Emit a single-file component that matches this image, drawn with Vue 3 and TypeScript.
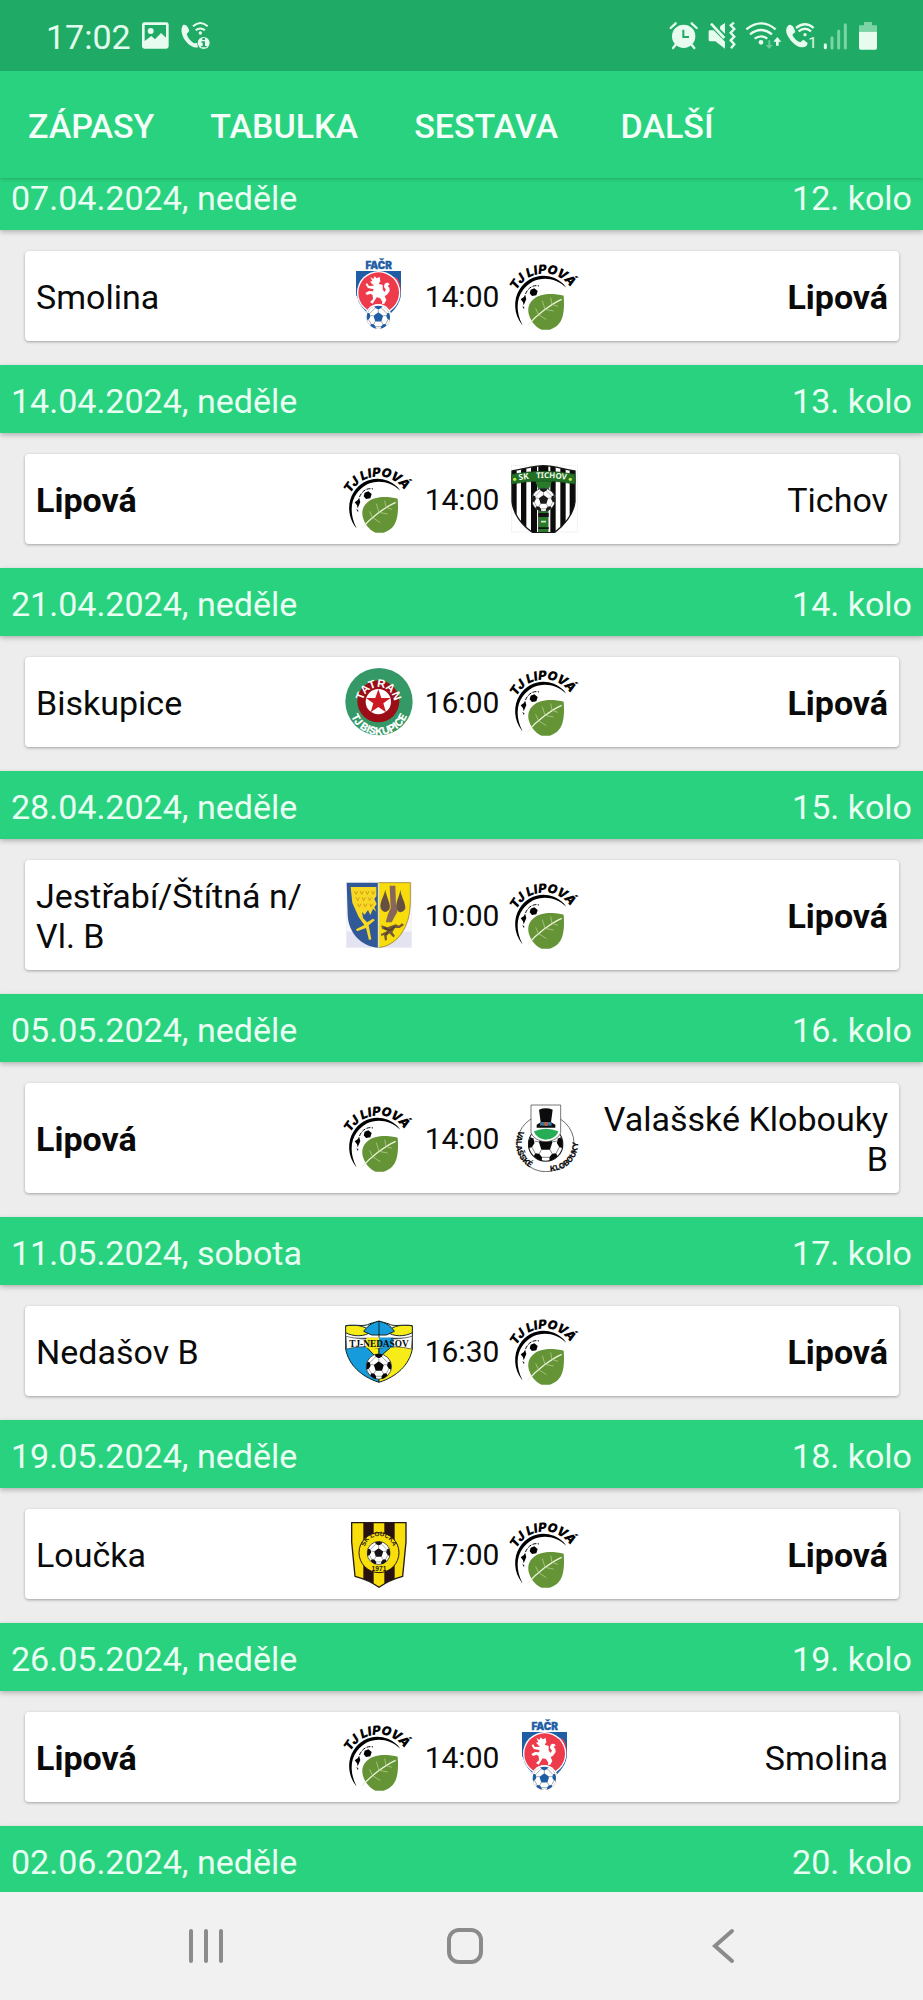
<script setup lang="ts">
interface Match {
  date: string
  round: string
  home: string
  away: string
  homeLogo: string
  awayLogo: string
  time: string
}

const ownTeam = 'Lipová'
const tabs: string[] = ['ZÁPASY', 'TABULKA', 'SESTAVA', 'DALŠÍ']

const matches: Match[] = [
  { date: '07.04.2024, neděle', round: '12. kolo', home: 'Smolina', away: 'Lipová', homeLogo: 'facr', awayLogo: 'lipova', time: '14:00' },
  { date: '14.04.2024, neděle', round: '13. kolo', home: 'Lipová', away: 'Tichov', homeLogo: 'lipova', awayLogo: 'tichov', time: '14:00' },
  { date: '21.04.2024, neděle', round: '14. kolo', home: 'Biskupice', away: 'Lipová', homeLogo: 'biskupice', awayLogo: 'lipova', time: '16:00' },
  { date: '28.04.2024, neděle', round: '15. kolo', home: 'Jestřabí/Štítná n/Vl. B', away: 'Lipová', homeLogo: 'jestrabi', awayLogo: 'lipova', time: '10:00' },
  { date: '05.05.2024, neděle', round: '16. kolo', home: 'Lipová', away: 'Valašské Klobouky B', homeLogo: 'lipova', awayLogo: 'klobouky', time: '14:00' },
  { date: '11.05.2024, sobota', round: '17. kolo', home: 'Nedašov B', away: 'Lipová', homeLogo: 'nedasov', awayLogo: 'lipova', time: '16:30' },
  { date: '19.05.2024, neděle', round: '18. kolo', home: 'Loučka', away: 'Lipová', homeLogo: 'loucka', awayLogo: 'lipova', time: '17:00' },
  { date: '26.05.2024, neděle', round: '19. kolo', home: 'Lipová', away: 'Smolina', homeLogo: 'lipova', awayLogo: 'facr', time: '14:00' },
]

const nextDate = '02.06.2024, neděle'
const nextRound = '20. kolo'

// Allow a line break after each slash of a joint-team name.
const breakable = (name: string): string => name.replace(/\//g, '/\u200b')
</script>

<template>
  <div class="phone">
    <svg class="defs" aria-hidden="true">
      <defs>
        <symbol id="ball" viewBox="0 0 100 100">
          <circle cx="50" cy="50" r="48" fill="#fff" stroke="#222" stroke-width="3" />
          <path d="M50 30 L69 44 L62 66 H38 L31 44 Z" fill="currentColor" />
          <path d="M35 5 Q50 -1 65 5 L62 13 L50 19 L38 13 Z M93 31 Q100 45 97 61 L88 59 L81 47 L84 35 Z M7 31 Q0 45 3 61 L12 59 L19 47 L16 35 Z M83 84 Q74 94 61 97 L60 87 L68 77 L79 76 Z M17 84 Q26 94 39 97 L40 87 L32 77 L21 76 Z" fill="currentColor" />
          <path d="M50 30V19M69 44L81 42M62 66L68 77M38 66L32 77M31 44L19 42M38 13L16 35M62 13L84 35M88 59L79 76M12 59L21 76M40 87H60" fill="none" stroke="#555" stroke-width="2" />
        </symbol>

        <symbol id="lipova" viewBox="0 0 204 204" overflow="visible">
          <path id="lipova-arc" d="M16 86 A95 95 0 0 1 193 109" fill="none" />
          <text font-family="Inter, sans-serif" font-weight="900" font-style="italic" font-size="38" fill="#000">
            <textPath href="#lipova-arc">TJ LIPOVÁ</textPath>
          </text>
          <path d="M33 188 C8 158 6 112 26 82 C54 36 116 26 158 67 L166 77 C126 38 66 42 36 84 C14 112 16 154 34 188 Z" fill="#000" />
          <path d="M40 112 C42 85 62 66 84 72" fill="none" stroke="#000" stroke-width="3" stroke-dasharray="12 4" />
          <path d="M59 83 L70 79 L80 87 L76 100 L63 102 L56 94 Z M29 112 L43 102 L46 111 L38 130 L36 121 Z" fill="#000" />
          <path d="M34 132 L40 136 L39 142 Z" fill="#000" />
          <path d="M158 101 C150 98 92 86 65 114 C46 132 52 155 56 164 C62 182 80 199 92 203 L116 203 C150 192 163 166 158 101 Z" fill="#649435" />
          <path d="M50 190 C76 160 120 126 152 112" fill="none" stroke="#eef4dd" stroke-width="4" />
          <path d="M102 142 L94 116M123 127L119 107M82 157L74 139M101 142L128 147M83 158L106 173M123 127L141 133" fill="none" stroke="#c3d6a0" stroke-width="2" />
        </symbol>

        <symbol id="facr" viewBox="0 0 204 204" overflow="visible">
          <text x="101" y="22" text-anchor="middle" font-family="Inter, sans-serif" font-weight="900" font-size="30" fill="#1f5da5" stroke="#1f5da5">FAČR</text>
          <path d="M33 27 H168 V92 C168 126 142 156 101 181 C60 156 33 126 33 92 Z" fill="#1f5da5" />
          <path d="M156 48 C174 72 170 112 136 148 L108 171 C146 136 159 86 148 45 Z" fill="#e63a4b" />
          <path d="M34 102 C38 126 58 150 82 166" fill="none" stroke="#fff" stroke-width="4" />
          <circle cx="101" cy="92" r="65" fill="#fff" />
          <circle cx="101" cy="92" r="61" fill="#ee3b4b" />
          <path d="M76 45 L85 51 L89 43 L95 49 L104 45 L106 58 L101 65 L113 69 L113 82 L118 90 L123 83 L117 75 C116 61 130 58 134 67 L128 72 L133 77 L134 87 L126 98 L119 102 L124 114 L118 125 L111 126 L112 119 L105 108 L95 106 L88 117 L83 125 L75 120 L84 112 L83 100 L77 95 L66 99 L61 93 L72 87 L84 88 L86 82 L69 78 L62 68 L66 63 L72 72 L87 71 L81 65 L75 59 L82 57 Z" fill="#fff" />
          <circle cx="100" cy="166" r="40" fill="#fff" />
          <use href="#ball" x="62" y="128" width="76" height="76" color="#1f5da5" />
          <circle cx="100" cy="166" r="37" fill="none" stroke="#fff" stroke-width="4" />
        </symbol>

        <clipPath id="tichov-shape">
          <path d="M3 18 C40 12 70 2 97 2 C125 2 158 12 192 18 V110 C188 148 158 183 130 203 H66 C34 183 7 148 3 110 Z" />
        </clipPath>
        <symbol id="tichov" viewBox="0 0 204 204">
          <rect x="1" y="1" width="199" height="200" fill="#fff" stroke="#eee" stroke-width="2" />
          <g clip-path="url(#tichov-shape)">
            <rect width="204" height="204" fill="#fff" />
            <path d="M0 0H17V204H0ZM30 0H46V204H30ZM60 0H78V204H60ZM118 0H134V204H118ZM148 0H164V204H148ZM176 0H204V204H176ZM82 0H112V204H82Z" fill="#0b0b0b" />
            <path d="M73 48H123L113 74H82Z" fill="#287b2a" />
            <rect x="84" y="136" width="27" height="68" fill="#287b2a" />
            <path d="M82 144H113V156H82ZM82 187H113V192H82Z" fill="#111" />
            <path d="M90 170H105" stroke="#cde8c8" stroke-width="5" />
          </g>
          <path d="M3 18 C40 12 70 2 97 2 C125 2 158 12 192 18 V110 C188 148 158 183 130 203 H66 C34 183 7 148 3 110 Z" fill="none" stroke="#171717" stroke-width="4" />
          <path id="tichov-arc" d="M12 48 Q97 31 184 47" fill="none" />
          <path d="M2 28 Q97 10 192 28 V57 Q97 39 2 57 Z" fill="#236f25" stroke="#174f19" stroke-width="2" />
          <text font-family="Noto Sans, sans-serif" font-weight="700" font-size="25" fill="#eef8e8">
            <textPath href="#tichov-arc" startOffset="12">SK</textPath>
          </text>
          <text font-family="Noto Sans, sans-serif" font-weight="700" font-size="24" fill="#eef8e8">
            <textPath href="#tichov-arc" startOffset="64">TICHOV</textPath>
          </text>
          <circle cx="11" cy="43" r="5" fill="#c4e84a" />
          <circle cx="178" cy="43" r="5" fill="#c4e84a" />
          <use href="#ball" x="61" y="68" width="73" height="73" color="#1b1b1b" />
        </symbol>

        <symbol id="biskupice" viewBox="0 0 204 204">
          <circle cx="102" cy="101" r="101" fill="#359967" />
          <circle cx="100" cy="100" r="63" fill="#9c0e17" />
          <circle cx="100" cy="101" r="38" fill="#fff" />
          <path d="M100 64 L109 90 H137 L115 106 L123 133 L100 117 L77 133 L85 106 L63 90 H91 Z" fill="#cc1822" />
          <path id="tatran-arc" d="M54 97 A47 47 0 0 1 147 99" fill="none" />
          <text text-anchor="middle" font-family="Liberation Sans, sans-serif" font-weight="700" font-size="34" fill="#fff">
            <textPath href="#tatran-arc" startOffset="50%">TATRAN</textPath>
          </text>
          <path id="biskupice-arc" d="M11 110 A91 91 0 0 0 193 110" fill="none" />
          <text text-anchor="middle" font-family="Inter, sans-serif" font-weight="800" font-size="32" fill="#fff">
            <textPath href="#biskupice-arc" startOffset="50%">TJ BISKUPICE</textPath>
          </text>
        </symbol>

        <symbol id="jestrabi" viewBox="0 0 204 204">
          <rect x="4" y="4" width="196" height="196" fill="#e4e3f1" />
          <rect x="4" y="4" width="196" height="148" fill="#f7f5fa" />
          <path d="M5 5H101V200C49 198 10 155 8 102Z" fill="#315997" />
          <path d="M101 5H196C196 53 198 89 188 119C174 163 144 195 101 200Z" fill="#f9dc0b" stroke="#806c25" stroke-width="2" />
          <path d="M101 5V200" stroke="#e7e4ae" stroke-width="5" />
          <path d="M17 18H94V46L88 53L95 69L88 79L94 92L84 83L76 102L69 87L59 101L51 93L54 111L66 124L84 113L90 117L71 133L79 175L72 177L63 141L36 151L33 145L58 132L41 108L22 65Z" fill="#f7d925" />
          <path d="M28 30l5 10 5-10M45 30l5 10 5-10M62 30l5 10 5-10M80 30l4 10 5-10M33 49l5 10 5-10M51 49l5 10 5-10M69 49l5 10 5-10M38 68l5 10 5-10M56 68l5 10 5-10M74 68l4 10 5-10" fill="none" stroke="#d29f12" stroke-width="3" />
          <path d="M134 14H151L153 72L157 92L140 124H122L129 99L137 82Z" fill="#87675c" />
          <path d="M121 26C116 49 103 63 107 82C114 98 128 94 134 83C138 68 124 48 121 26ZM166 26C163 48 151 64 154 82C160 99 176 96 181 82C182 65 168 46 166 26Z" fill="#665044" />
          <path d="M109 133L127 139L152 130L162 134L171 127L177 132L164 141L150 141L142 154L150 165L145 169L133 157L125 164L126 176L120 179L117 162L109 165L108 159L127 150L111 143Z" fill="#71583c" />
          <path d="M117 140l18 8 15-12M121 162l9-10" fill="none" stroke="#3f301d" stroke-width="3" />
        </symbol>

        <symbol id="klobouky" viewBox="0 0 204 204">
          <circle cx="104" cy="118" r="85" fill="#fff" stroke="#222" stroke-width="2" />
          <use href="#ball" x="50" y="66" width="108" height="108" color="#090909" />
          <path id="valasske-arc" d="M25 78 A84 84 0 0 0 104 202" fill="none" />
          <path id="klobouky-arc" d="M112 202 A84 84 0 0 0 182 64" fill="none" />
          <text font-family="Inter, sans-serif" font-weight="800" font-size="24" fill="#111">
            <textPath href="#valasske-arc">VALAŠSKÉ</textPath>
          </text>
          <text font-family="Inter, sans-serif" font-weight="800" font-size="24" fill="#111">
            <textPath href="#klobouky-arc" startOffset="6">KLOBOUKY</textPath>
          </text>
          <path d="M60 3H149V86C143 101 127 112 104 113C82 112 66 101 60 86Z" fill="#fff" stroke="#333" stroke-width="2" />
          <path d="M69 82Q104 67 142 82C137 98 122 106 104 107C86 106 73 96 69 82Z" fill="#27ad55" />
          <path d="M84 17Q104 9 125 17L120 55L133 62V71H77V62L89 55Z" fill="#0b0c0d" />
          <path d="M87 54H122V65H87Z" fill="#3e749c" />
          <circle cx="105" cy="60" r="6" fill="#ba633d" />
        </symbol>

        <clipPath id="nedasov-shape">
          <path d="M2 26C31 21 56 31 75 20L102 12L129 20C148 31 173 21 202 26V96C193 144 155 179 102 196C49 179 11 144 2 96Z" />
        </clipPath>
        <symbol id="nedasov" viewBox="0 0 204 204">
          <g clip-path="url(#nedasov-shape)" stroke="#162626" stroke-width="3">
            <rect width="102" height="204" fill="#169bdc" />
            <rect x="102" width="102" height="204" fill="#f7ec17" />
            <path d="M52 77L102 57V130Z" fill="#f7ec17" />
            <path d="M102 57L155 75L102 122Z" fill="#169bdc" />
            <path d="M0 0H204V64H0Z" fill="#fff" />
            <path d="M0 27C28 22 58 24 78 44C60 60 24 60 0 46Z" fill="#f7ec17" />
            <path d="M204 27C176 22 146 24 126 44C144 60 180 60 204 46Z" fill="#f7ec17" />
            <path d="M56 43C72 20 92 14 102 12C118 16 136 24 148 43L124 54H80Z" fill="#169bdc" />
            <path d="M102 12V62" />
          </g>
          <path d="M2 26C31 21 56 31 75 20L102 12L129 20C148 31 173 21 202 26V96C193 144 155 179 102 196C49 179 11 144 2 96Z" fill="none" stroke="#122" stroke-width="3" />
          <path d="M3 58Q49 70 102 65Q158 70 202 58L199 96Q150 84 102 94Q50 84 5 96Z" fill="#fff" stroke="#333" stroke-width="2" />
          <path d="M64 62H102V93H64Z" fill="#f7ec17" />
          <path d="M102 62H145V92H102Z" fill="#169bdc" />
          <text x="102" y="89" text-anchor="middle" font-family="Liberation Serif, serif" font-weight="700" font-size="28" fill="#080808">TJ-NEDAŠOV</text>
          <use href="#ball" x="62" y="109" width="79" height="79" color="#080808" />
        </symbol>

        <clipPath id="loucka-shape">
          <path d="M20 8H183V66L173 169Q132 180 102 202Q72 180 30 169L20 66Z" />
        </clipPath>
        <symbol id="loucka" viewBox="0 0 204 204">
          <g clip-path="url(#loucka-shape)">
            <rect width="204" height="204" fill="#f8df0b" />
            <path d="M55 0H86V204H55ZM118 0H149V204H118Z" fill="#281111" />
          </g>
          <path d="M20 8H183V66L173 169Q132 180 102 202Q72 180 30 169L20 66Z" fill="none" stroke="#231918" stroke-width="4" />
          <circle cx="102" cy="98" r="60" fill="#f8df0b" stroke="#2a1615" stroke-width="3" />
          <path id="loucka-arc" d="M58 92A44 44 0 0 1 146 92" fill="none" />
          <text text-anchor="middle" font-family="Liberation Sans, sans-serif" font-weight="700" font-size="19" fill="#251411">
            <textPath href="#loucka-arc" startOffset="50%">SK LOUČKA</textPath>
          </text>
          <text x="102" y="154" text-anchor="middle" font-family="Liberation Sans, sans-serif" font-weight="700" font-size="20" fill="#251411">1971</text>
          <use href="#ball" x="65" y="63" width="72" height="72" color="#161216" />
        </symbol>
      </defs>
    </svg>

    <header class="top">
      <div class="status">
        <div class="status-left">
          <span class="clock">17:02</span>
          <svg width="70" height="30" viewBox="424 62 210 90" fill="#e8fbef" aria-hidden="true">
            <path fill-rule="evenodd" d="M434 66H500Q507 66 507 73V138Q507 145 500 145H434Q427 145 427 138V73Q427 66 434 66ZM435 74V122L455 107L466 117L484 98L499 112V74Z" />
            <circle cx="453" cy="92" r="9" />
            <path d="M550 74C559 69 567 82 569 92L561 101C564 113 573 122 583 129L592 128L595 141C585 144 571 138 561 126C548 111 540 88 550 74Z" />
            <path d="M580 78Q602 58 624 78M588 90Q602 79 616 90" fill="none" stroke="#e8fbef" stroke-width="6" />
            <circle cx="602" cy="98" r="5" />
            <circle cx="612" cy="128" r="18" />
            <path d="M608 113H616V119H608ZM605 123H616V137H621V141H604V137H609V127H605Z" fill="#1fab66" />
          </svg>
        </div>
        <svg width="208" height="30" viewBox="624 62 624 90" fill="#e8fbef" aria-hidden="true">
          <circle cx="668" cy="108" r="35" />
          <path d="M629 83L644 69M692 69L707 83M644 133L636 143M692 133L700 143" fill="none" stroke="#e8fbef" stroke-width="7" stroke-linecap="round" />
          <path d="M667 88V110H684" fill="none" stroke="#1fab66" stroke-width="6" />
          <path d="M743 93Q743 90 747 90H758L792 124V145L763 123H747Q743 123 743 119ZM778 77L792 68V100L777 86Z" />
          <path d="M750 70L790 113" stroke="#e8fbef" stroke-width="8" />
          <path d="M819 67L809 75L820 86L809 97L820 109L809 120L820 132L810 144" fill="none" stroke="#e8fbef" stroke-width="7" />
          <path d="M856 87Q900 51 944 87M867 102Q900 76 933 102M881 115Q900 101 919 115" fill="none" stroke="#e8fbef" stroke-width="7" />
          <circle cx="900" cy="126" r="7" />
          <path d="M922 120H928V134H935L925 146L914 134H922Z" fill="#69cc98" />
          <path d="M945 136V124H937L949 110L961 124H953V136Z" />
          <path d="M981 76C990 67 1000 81 1003 95L994 103C998 114 1008 122 1018 126L1027 118L1040 128C1038 145 1018 144 1003 133C984 118 966 91 981 76Z" />
          <path d="M1005 83Q1032 60 1058 83M1013 93Q1032 77 1050 93" fill="none" stroke="#e8fbef" stroke-width="7" />
          <circle cx="1032" cy="103" r="5" />
          <text x="1042" y="143" font-family="Roboto, sans-serif" font-size="46">1</text>
          <path d="M1093 133V142" stroke="#e8fbef" stroke-width="9" stroke-linecap="round" />
          <path d="M1113 112V143M1133 92V143M1153 73V143" stroke="#7bd4a5" stroke-width="9" stroke-linecap="round" />
          <path d="M1209 65H1233V75H1248V94H1194V75H1209Z" fill="#7bd4a5" />
          <path d="M1194 94H1248V143Q1248 148 1243 148H1199Q1194 148 1194 143Z" />
        </svg>
      </div>

      <nav class="tabs">
        <button v-for="tab in tabs" :key="tab" type="button" class="tab">{{ tab }}</button>
      </nav>
    </header>

    <main class="schedule">
      <section v-for="match in matches" :key="match.round" class="match">
        <h2 class="round">
          <span>{{ match.date }}</span>
          <span>{{ match.round }}</span>
        </h2>
        <article class="card">
          <div class="team home" :class="{ own: match.home === ownTeam }">{{ breakable(match.home) }}</div>
          <div class="center">
            <svg class="logo" aria-hidden="true"><use :href="'#' + match.homeLogo" /></svg>
            <time class="time">{{ match.time }}</time>
            <svg class="logo" aria-hidden="true"><use :href="'#' + match.awayLogo" /></svg>
          </div>
          <div class="team away" :class="{ own: match.away === ownTeam }">{{ match.away }}</div>
        </article>
      </section>
      <h2 class="round">
        <span>{{ nextDate }}</span>
        <span>{{ nextRound }}</span>
      </h2>
    </main>

    <footer class="system-nav">
      <button type="button" aria-label="Poslední aplikace">
        <svg width="36" height="36" viewBox="0 0 36 36"><path d="M3 3V33M18 3V33M33 3V33" stroke="#8b8b8b" stroke-width="4" stroke-linecap="round" /></svg>
      </button>
      <button type="button" aria-label="Domů">
        <svg width="36" height="36" viewBox="0 0 36 36"><rect x="2" y="2" width="32" height="32" rx="10" fill="none" stroke="#8b8b8b" stroke-width="4" /></svg>
      </button>
      <button type="button" aria-label="Zpět">
        <svg width="36" height="36" viewBox="0 0 36 36"><path d="M26 3L9 18L26 33" fill="none" stroke="#8b8b8b" stroke-width="4" stroke-linecap="round" /></svg>
      </button>
    </footer>
  </div>
</template>

<style>
body {
  margin: 0;
}
</style>

<style scoped>
.phone {
  height: 100vh;
  display: flex;
  flex-direction: column;
  overflow: hidden;
  background: #ededed;
  color: #0a0a0a;
  font-family: Roboto, sans-serif;
  font-size: 34px;
  line-height: 40px;
}

.defs {
  position: absolute;
  width: 0;
  height: 0;
}

.top {
  position: relative;
  z-index: 1;
  flex: none;
  box-shadow: 0 1px 4px rgba(0, 0, 0, 0.2);
}

.status {
  box-sizing: border-box;
  height: 71px;
  padding: 0 46px;
  display: flex;
  align-items: center;
  justify-content: space-between;
  background: #1fab66;
}

.status-left {
  display: flex;
  align-items: center;
  gap: 10px;
}

.clock {
  padding-top: 3px;
  color: #e2fbec;
}

.tabs {
  height: 107px;
  display: flex;
  background: #29d27e;
}

.tab {
  min-width: 162px;
  padding: 3px 28px 0;
  border: 0;
  background: none;
  color: #f4fff9;
  font: 500 34px/40px Roboto, sans-serif;
}

.schedule {
  flex: 1;
  min-height: 0;
  margin-top: -16px;
  overflow: hidden auto;
  scrollbar-width: none;
}

.round {
  box-sizing: border-box;
  height: 68px;
  margin: 0;
  padding: 3px 11px 0;
  display: flex;
  align-items: center;
  justify-content: space-between;
  background: #29d27e;
  color: #e9fff3;
  font-size: 34px;
  font-weight: 400;
  box-shadow: 0 2px 5px rgba(0, 0, 0, 0.25);
}

.card {
  margin: 21px 24px 24px 25px;
  padding: 0 11px;
  display: flex;
  align-items: center;
  border-radius: 4px;
  background: #fff;
  box-shadow: 0 1px 3px rgba(0, 0, 0, 0.32);
}

.team {
  box-sizing: border-box;
  flex: 1 1 0;
  min-width: 0;
  padding: 16px 0 14px;
}

.home {
  padding-right: 16px;
}

.away {
  padding-left: 16px;
  text-align: right;
}

.own {
  font-weight: 700;
}

.center {
  flex: none;
  padding: 11px 0;
  display: flex;
  align-items: center;
}

.logo {
  width: 68px;
  height: 68px;
  overflow: visible;
}

.time {
  width: 98px;
  padding-top: 2px;
  text-align: center;
  font-size: 30px;
}

.system-nav {
  flex: none;
  height: 108px;
  padding: 0 70px 0 76px;
  position: relative;
  z-index: 1;
  display: grid;
  grid-template-columns: repeat(3, 1fr);
  background: #f1f1f1;
}

.system-nav button {
  padding: 0;
  border: 0;
  display: grid;
  place-items: center;
  background: none;
}
</style>
